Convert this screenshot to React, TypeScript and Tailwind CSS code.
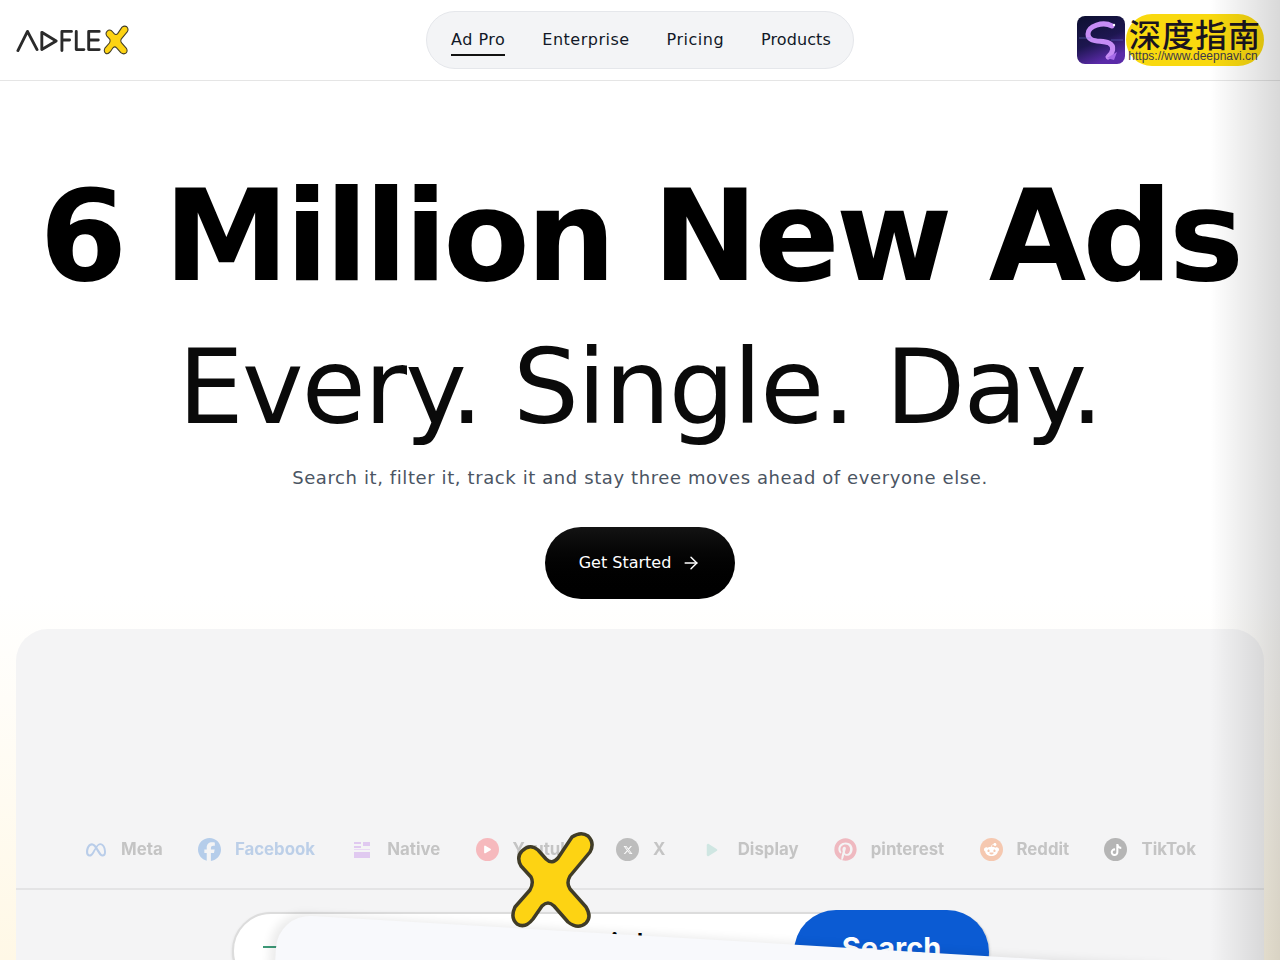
import { ArrowRight } from "lucide-react";
import { FaMeta, FaFacebook, FaPinterest, FaRedditAlien, FaTiktok, FaPlay, FaXTwitter } from "react-icons/fa6";
import type { ReactNode } from "react";

function XMark({ className }: { className: string }) {
  return (
    <svg viewBox="-3 -3 86 100" className={className}>
      <path
        d="M60 4 Q69 -2 76 3 Q83 10 78 19 L58 43 Q54 50 58 56 L74 74 Q80 84 74 90 Q66 97 56 89 L42 73 Q36 67 30 73 L21 86 Q13 96 5 91 Q-2 85 3 74 L18 57 Q22 50 19 44 L9 33 Q4 24 10 18 Q18 10 26 17 L34 26 Q40 32 46 25 Z"
        fill="#fdd313"
        stroke="#403c28"
        strokeWidth="3.5"
        strokeLinejoin="round"
      />
    </svg>
  );
}

function Logo() {
  return (
    <div className="flex items-center" aria-label="ADFLEX">
      <svg viewBox="0 0 92 26" className="h-[26px] w-[88px]" fill="none" stroke="#2a2a2a" strokeWidth="3" strokeLinecap="round" strokeLinejoin="round">
        <path d="M2 24 L12 4 L22 23" />
        <path d="M27 5 L42 14 L27 23 Z" />
        <path d="M48 24 V4 H58 M48 13 H56" />
        <path d="M63 4 V23 H71" />
        <path d="M76 4 H87 M76 13 H86 M76 23 H87 M76 4 V23" />
      </svg>
      <XMark className="-ml-[1px] h-[30px] w-[26px]" />
    </div>
  );
}

function Badge() {
  return (
    <div className="flex items-center">
      <svg viewBox="0 0 48 48" className="h-12 w-12 rounded-lg">
        <defs>
          <linearGradient id="bg" x1="0" y1="0" x2="0.4" y2="1">
            <stop offset="0" stopColor="#0d1030" />
            <stop offset="0.6" stopColor="#1d1650" />
            <stop offset="1" stopColor="#5a2aa8" />
          </linearGradient>
        </defs>
        <rect width="48" height="48" fill="url(#bg)" />
        <path d="M35 10 C26 5 11 10 11 18 C11 27 24 24 32 27 C38 30 36 37 31 41" fill="none" stroke="#c68cf5" strokeWidth="5" strokeLinecap="round" />
        <path d="M30 42 L40 36 L37 44 Z" fill="#a66ae8" />
        <circle cx="37" cy="9" r="1.2" fill="#fff" />
        <path d="M2 22 H14 M34 24 H46" stroke="#6d7fd8" strokeWidth="0.5" />
      </svg>
      <div className="ml-[1px] flex h-[52px] w-[138px] flex-col items-center justify-center rounded-full bg-[#f9d90f]">
        <div className="whitespace-nowrap text-[32px] font-medium leading-[30px] tracking-[1px] text-[#1a1420] [font-family:'Noto_Sans_CJK_SC',sans-serif]">深度指南</div>
        <div className="mr-[4px] mt-[2px] text-[12px] leading-[12px] text-[#3d3a4a] [font-family:'Liberation_Sans',sans-serif]">https://www.deepnavi.cn</div>
      </div>
    </div>
  );
}

const tabs: { label: string; icon: ReactNode; text?: string }[] = [
  { label: "Meta", icon: <FaMeta className="h-[20px] w-[20px] text-[#b9cde9]" /> },
  { label: "Facebook", text: "text-[#bccfe8]", icon: <FaFacebook className="h-[23px] w-[23px] text-[#b5cdea]" /> },
  {
    label: "Native",
    icon: (
      <svg viewBox="0 0 18 18" className="h-[18px] w-[18px]">
        <path d="M1 1h7v2H1zM10 1h7v4h-7zM1 5h7v2H1zM1 11h16v6H1z" fill="#e0c9f0" />
        <path d="M1 8h16v1H1z" fill="#ead9f4" />
      </svg>
    ),
  },
  {
    label: "Youtube",
    icon: (
      <span className="flex h-[23px] w-[23px] items-center justify-center rounded-full bg-[#f6b9bd]">
        <FaPlay className="h-[9px] w-[9px] text-white" />
      </span>
    ),
  },
  {
    label: "X",
    icon: (
      <span className="flex h-[23px] w-[23px] items-center justify-center rounded-full bg-[#bdbdbd]">
        <FaXTwitter className="h-[10px] w-[10px] text-white" />
      </span>
    ),
  },
  { label: "Display", icon: <FaPlay className="h-[14px] w-[14px] text-[#cfe6e2]" /> },
  {
    label: "pinterest",
    icon: <FaPinterest className="h-[23px] w-[23px] text-[#efb9c0]" />,
  },
  {
    label: "Reddit",
    icon: (
      <span className="flex h-[23px] w-[23px] items-center justify-center rounded-full bg-[#f5c8b0]">
        <FaRedditAlien className="h-[15px] w-[15px] text-white" />
      </span>
    ),
  },
  {
    label: "TikTok",
    icon: (
      <span className="flex h-[23px] w-[23px] items-center justify-center rounded-full bg-[#b5b5b5]">
        <FaTiktok className="h-[12px] w-[12px] text-white" />
      </span>
    ),
  },
];

export default function App() {
  return (
    <div className="relative h-[960px] w-full overflow-hidden bg-gradient-to-b from-white from-[62%] to-[#fff8e6] [font-family:'DejaVu_Sans',sans-serif]">
      <header className="flex h-[81px] items-center justify-between border-b border-[#e5e5e5] bg-white pl-4 pr-4">
        <div className="w-[248px]"><Logo /></div>
        <nav className="flex h-[58px] w-[428px] items-center gap-[37px] rounded-full border border-[#e5e7eb] bg-[#f3f4f6] pl-6 text-base tracking-[0.5px] text-[#111827]">
          <a className="relative">
            Ad Pro
            <span className="absolute -bottom-[4px] left-0 h-[2px] w-full bg-[#111]" />
          </a>
          <a>Enterprise</a>
          <a>Pricing</a>
          <a className="tracking-[0.1px]">Products</a>
        </nav>
        <div className="flex w-[248px] justify-end"><Badge /></div>
      </header>

      <main className="flex flex-col items-center">
        <h1 className="mt-[82px] whitespace-nowrap text-[126px] font-bold leading-[148px] tracking-[-3.7px] text-black">6 Million New Ads</h1>
        <h2 className="mt-[11px] whitespace-nowrap text-[104px] leading-[130px] tracking-[-1.7px] text-[#0a0a0a]">Every. Single. Day.</h2>
        <p className="mt-[12px] text-lg leading-7 tracking-[0.6px] text-[#4b5563]">Search it, filter it, track it and stay three moves ahead of everyone else.</p>
        <button className="mt-[35px] flex h-[72px] w-[190px] items-center justify-center gap-[10px] rounded-full bg-gradient-to-b from-[#131313] to-black text-base text-white">
          Get Started
          <ArrowRight className="h-5 w-5" strokeWidth={1.75} />
        </button>

        <section className="relative mt-[30px] h-[400px] w-[1248px] self-center overflow-hidden rounded-t-[32px] bg-[#f4f4f5]">
          <div className="flex h-[259px] items-end justify-center gap-[35.25px] pb-[27px] blur-[0.6px] [font-family:'Inter',sans-serif]">
            {tabs.map((t) => (
              <div key={t.label} className="flex h-[23px] items-center gap-[14px]">
                <span className="flex w-[23px] justify-center">{t.icon}</span>
                <span className={`text-[16.8px] font-bold ${t.text ?? "text-[#c4c4c4]"}`}>{t.label}</span>
              </div>
            ))}
          </div>
          <div className="h-[2px] bg-[#e4e4e5]" />
          <div className="relative ml-[216px] mt-[22px] flex h-[78px] w-[758px] items-center rounded-full border-2 border-[#dcdcdc] bg-white [font-family:'Inter',sans-serif] shadow-sm">
            <span className="-mt-[8px] ml-[29px] h-[2px] w-[14px] bg-[#3d9a78]" />
            <span className="-mt-[14px] ml-[300px] text-[30px] font-medium text-black">Drink</span>
            <button className="absolute -right-[1px] -top-[4px] h-[84px] w-[195px] rounded-full bg-[#0b5bd3] pb-2 text-[29px] font-bold text-white">Search</button>
          </div>
          <div className="absolute left-[262px] top-[285px] h-[200px] w-[900px] origin-top-left rotate-[3.4deg] rounded-tl-[34px] bg-[#f8f9fc] shadow-[-6px_-2px_10px_rgba(0,0,0,0.08)]" />
        </section>
      </main>

      <XMark className="absolute left-[509px] top-[830px] h-[100px] w-[86px]" />
      <div className="pointer-events-none absolute inset-y-0 right-0 w-[70px] bg-gradient-to-r from-transparent to-black/15" />
    </div>
  );
}
